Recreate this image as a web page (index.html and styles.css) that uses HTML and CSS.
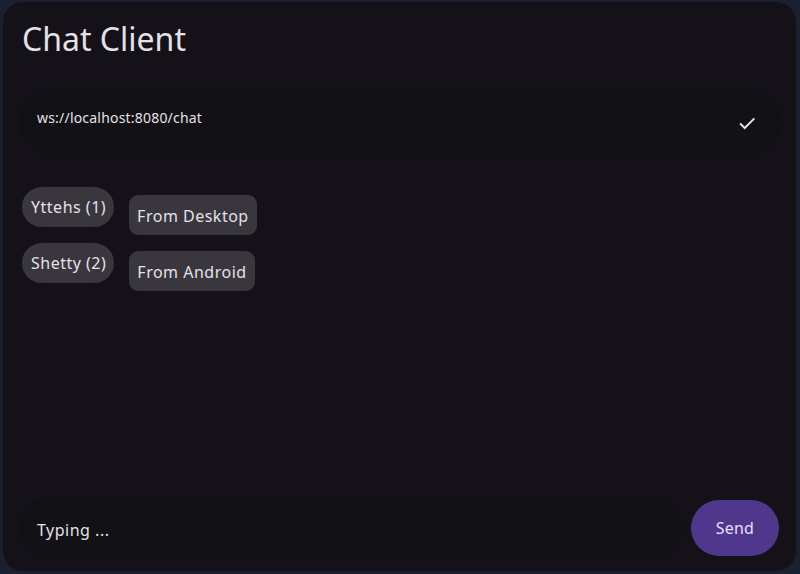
FILE: index.html
```html
<!DOCTYPE html>
<html>
<head>
<meta charset="utf-8">
<link rel="stylesheet" href="styles.css">
</head>
<body>
<div class="window">
  <h1 class="title">Chat Client</h1>
  <div class="url-field">
    <span class="url-text">ws://localhost:8080/chat</span>
    <svg class="check" width="22" height="22" viewBox="0 0 24 24"><path d="M4.5 12.5l5 5L20 7" fill="none" stroke="#e6e0e9" stroke-width="2.1"/></svg>
  </div>
  <div class="messages">
    <div class="msg-row">
      <span class="chip">Yttehs (1)</span>
      <span class="bubble">From Desktop</span>
    </div>
    <div class="msg-row">
      <span class="chip">Shetty (2)</span>
      <span class="bubble">From Android</span>
    </div>
  </div>
  <div class="composer">
    <div class="input-field"><span class="placeholder">Typing ...</span></div>
    <button class="send">Send</button>
  </div>
</div>
</body>
</html>
```
FILE: styles.css
```css
html, body {
  margin: 0;
  padding: 0;
  height: 100%;
  background: #1b2030;
}
body {
  padding: 2px 4px 3px 3px;
  box-sizing: border-box;
  font-family: "Noto Sans", "Open Sans", sans-serif;
}
.window {
  height: 100%;
  background: #141218;
  border-radius: 20px;
  display: flex;
  flex-direction: column;
  padding: 0 17px 14px 19px;
  box-sizing: border-box;
}
.title {
  margin: 16px 0 0 0;
  font-size: 32px;
  font-weight: 400;
  color: #e6e0e9;
  line-height: 42px;
}
.url-field {
  margin-top: 32px;
  height: 60px;
  border-radius: 30px;
  background: #121116;
  box-shadow: 0 0 3px rgba(0,0,0,0.25);
  display: flex;
  align-items: center;
  padding: 0 21px 0 15px;
  justify-content: space-between;
}
.url-text {
  font-size: 14px;
  letter-spacing: 0.2px;
  color: #e6e0e9;
  margin-top: -10px;
}
.check { margin-top: 2px; }
.messages {
  flex: 1;
  margin-top: 35px;
  display: flex;
  flex-direction: column;
  gap: 8px;
}
.msg-row {
  display: flex;
  align-items: flex-start;
  gap: 15px;
}
.chip {
  height: 40px;
  line-height: 40px;
  padding: 0 8px 0 9px;
  border-radius: 20px;
  background: #39363d;
  color: #e6e0e9;
  font-size: 16px;
  letter-spacing: 0.5px;
}
.bubble {
  margin-top: 8px;
  height: 40px;
  line-height: 42px;
  padding: 0 8px 0 8px;
  border-radius: 9px;
  background: #39363d;
  color: #e6e0e9;
  font-size: 16px;
  letter-spacing: 0.5px;
}
.composer {
  display: flex;
  align-items: center;
  gap: 11px;
}
.input-field {
  flex: 1;
  height: 58px;
  border-radius: 29px;
  background: #121116;
  box-shadow: 0 0 3px rgba(0,0,0,0.25);
  display: flex;
  align-items: center;
  padding-left: 15px;
}
.placeholder {
  font-size: 16px;
  letter-spacing: 0.5px;
  color: #e6e0e9;
  margin-top: 4px;
}
.send {
  width: 88px;
  height: 56px;
  border: none;
  border-radius: 28px;
  background: #4f378b;
  color: #eaddff;
  font-family: inherit;
  font-size: 16px;
  letter-spacing: 0.2px;
  padding: 0;
}
```
